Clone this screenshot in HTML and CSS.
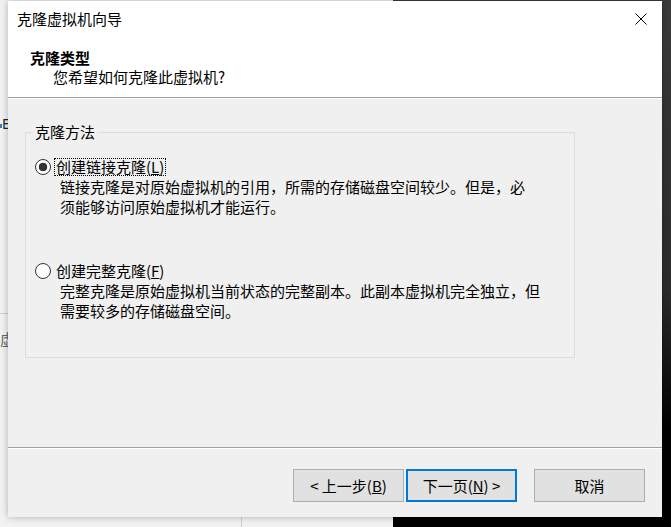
FILE: index.html
```html
<!DOCTYPE html>
<html lang="zh-CN">
<head>
<meta charset="utf-8">
<title>克隆虚拟机向导</title>
<link rel="stylesheet" href="styles.css">
</head>
<body>
<div class="desktop">
  <div class="bg-dark"></div>
  <div class="bg-win">
    <span class="bg-dot"></span>
    <span class="bg-e">E</span>
    <span class="bg-rule"></span>
    <span class="bg-xu">虚</span>
  </div>
  <span class="bg-vline"></span>

  <div class="dialog">
    <div class="head">
      <div class="titlebar">
        <span class="title">克隆虚拟机向导</span>
        <svg class="close" width="12" height="12" viewBox="0 0 12 12"><path d="M0.5 0.5L11.5 11.5M11.5 0.5L0.5 11.5" stroke="#000" stroke-width="1" fill="none"/></svg>
      </div>
      <div class="h-title">克隆类型</div>
      <div class="h-sub">您希望如何克隆此虚拟机?</div>
    </div>

    <div class="body">
      <fieldset class="group">
        <legend class="group-label">克隆方法</legend>
        <div class="opt">
          <div class="radio-row"><span class="radio checked"></span><span class="lbl focus">创建链接克隆(<u>L</u>)</span></div>
          <div class="desc">链接克隆是对原始虚拟机的引用，所需的存储磁盘空间较少。但是，必<br>须能够访问原始虚拟机才能运行。</div>
        </div>
        <div class="opt opt-second">
          <div class="radio-row"><span class="radio"></span><span class="lbl">创建完整克隆(<u>F</u>)</span></div>
          <div class="desc">完整克隆是原始虚拟机当前状态的完整副本。此副本虚拟机完全独立，但<br>需要较多的存储磁盘空间。</div>
        </div>
      </fieldset>
    </div>

    <div class="sep"></div>

    <div class="footer">
      <button class="btn">&lt; 上一步(<u>B</u>)</button>
      <button class="btn btn-default">下一页(<u>N</u>) &gt;</button>
      <button class="btn btn-cancel">取消</button>
    </div>
  </div>
</div>
</body>
</html>
```

FILE: styles.css
```css
html, body {
  margin: 0;
  padding: 0;
}
body {
  background: #f2f2f2;
  font-family: "Noto Sans CJK SC", "Noto Sans", sans-serif;
  color: #000;
  overflow: hidden;
}
.desktop {
  position: relative;
  width: 671px;
  height: 527px;
  overflow: hidden;
}

/* background windows */
.bg-dark {
  position: absolute;
  left: 393px;
  top: 0;
  right: 0;
  bottom: 0;
  background: linear-gradient(#3a3a3a 0, #2c2c2c 55%, #000 82%);
}
.bg-win {
  position: absolute;
  left: 0;
  top: 0;
  width: 40px;
  height: 527px;
}
.bg-dot {
  position: absolute;
  left: 0;
  top: 124px;
  width: 2px;
  height: 4px;
  background: #2a7fd4;
}
.bg-e {
  position: absolute;
  left: 2px;
  top: 114px;
  font-family: "Noto Sans", sans-serif;
  font-size: 14px;
  line-height: 20px;
  color: #222;
}
.bg-rule {
  position: absolute;
  left: 0;
  top: 313px;
  width: 30px;
  height: 1px;
  background: #cfcfcf;
}
.bg-xu {
  position: absolute;
  left: 0;
  top: 329px;
  font-size: 15px;
  line-height: 20px;
  color: #666;
}
.bg-vline {
  position: absolute;
  left: 241px;
  top: 500px;
  width: 1px;
  height: 27px;
  background: #cfcfcf;
}

/* dialog */
.dialog {
  position: absolute;
  left: 8px;
  top: 1px;
  width: 654px;
  height: 516px;
  background: #f0f0f0;
  display: flex;
  flex-direction: column;
  box-shadow: 0 0 7px rgba(0, 0, 0, 0.28);
}
.head {
  background: #fff;
  height: 88px;
  padding-top: 8px;
  border-bottom: 1px solid #a0a0a0;
  box-shadow: 0 1px 0 #fff;
  flex: none;
}
.titlebar {
  display: flex;
  align-items: center;
  justify-content: space-between;
  height: 20px;
  padding: 0 15px 0 9px;
}
.title {
  font-size: 15px;
  line-height: 20px;
}
.close {
  display: block;
}
.h-title {
  margin-top: 19px;
  padding-left: 22px;
  font-size: 15px;
  font-weight: bold;
  line-height: 19px;
}
.h-sub {
  padding-left: 45px;
  font-size: 15px;
  line-height: 19px;
}

.body {
  flex: 1;
  padding: 24px 0 0 17px;
}
.group {
  margin: 0;
  width: 550px;
  box-sizing: border-box;
  border: 1px solid #dcdcdc;
  padding: 0 0 36px 9px;
  font-size: 15px;
}
.group-label {
  margin-left: -2px;
  padding: 0 2px;
  line-height: 20px;
}
.opt {
  margin-top: 15px;
}
.opt-second {
  margin-top: 44px;
}
.radio-row {
  display: flex;
  align-items: center;
  height: 20px;
}
.radio {
  width: 16px;
  height: 16px;
  box-sizing: border-box;
  border: 1px solid #333;
  border-radius: 50%;
  background: #fff;
  flex: none;
}
.radio.checked {
  background: radial-gradient(circle, #333 0, #333 4px, #fff 4.6px);
}
.lbl {
  margin-left: 3px;
  padding: 0 1px;
  line-height: 16px;
  border: 1px dotted transparent;
}
.lbl.focus {
  border-color: #000;
}
.desc {
  padding-left: 25px;
  line-height: 20px;
}

.sep {
  flex: none;
  height: 1px;
  background: #a0a0a0;
  border-bottom: 1px solid #fff;
}
.footer {
  flex: none;
  height: 68px;
  box-sizing: border-box;
  padding: 20px 17px 0 0;
  display: flex;
  justify-content: flex-end;
  align-items: flex-start;
}
.btn {
  width: 111px;
  height: 33px;
  box-sizing: border-box;
  margin: 0;
  padding: 0;
  border: 1px solid #adadad;
  background: #e1e1e1;
  font-family: "Noto Sans CJK SC", "Noto Sans", sans-serif;
  font-size: 15px;
  line-height: 20px;
  color: #000;
}
.btn-default {
  margin-left: 2px;
  border: 2px solid #0078d7;
}
.btn-cancel {
  margin-left: 17px;
}
```
